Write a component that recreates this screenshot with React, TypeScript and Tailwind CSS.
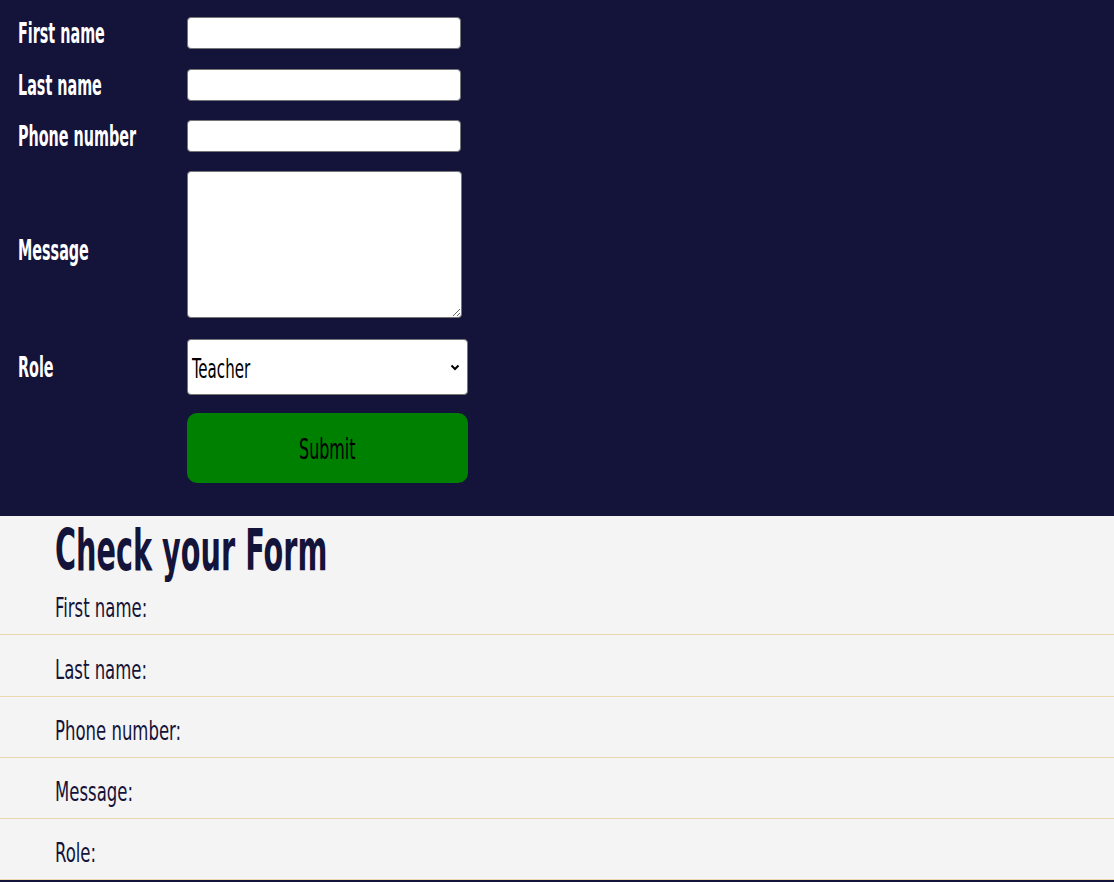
export default function App() {
  const fam = "font-['Liberation_Sans_Narrow','DejaVu_Sans_Condensed',sans-serif]";
  const label = "inline-block origin-left scale-x-[0.57] text-[28px] font-bold leading-none text-white whitespace-nowrap";
  const rows = ["First name:", "Last name:", "Phone number:", "Message:", "Role:"];
  const rowPad = ["pt-[13px] pb-[10px]", "pt-[19px] pb-[10px]", "pt-[18px] pb-[10px]", "pt-[18px] pb-[10px]", "pt-[18px] pb-[10px]"];
  return (
    <div className={`min-h-screen bg-[#f4f4f4] ${fam}`}>
      <form className="h-[516px] bg-[#141339] pl-[18px] pt-[17px]" onSubmit={(e) => e.preventDefault()}>
        <div className="flex h-[32px] items-center">
          <div className="w-[169px] pt-[4px]"><span className={label}>First name</span></div>
          <input className="h-[32px] w-[274px] rounded-[4px] border border-[#767676] bg-white" />
        </div>
        <div className="mt-[20px] flex h-[32px] items-center">
          <div className="w-[169px] pt-[4px]"><span className={label}>Last name</span></div>
          <input className="h-[32px] w-[274px] rounded-[4px] border border-[#767676] bg-white" />
        </div>
        <div className="mt-[19px] flex h-[32px] items-center">
          <div className="w-[169px] pt-[4px]"><span className={label}>Phone number</span></div>
          <input className="h-[32px] w-[274px] rounded-[4px] border border-[#767676] bg-white" />
        </div>
        <div className="mt-[19px] flex items-center">
          <div className="w-[169px] pt-[14px]"><span className={label}>Message</span></div>
          <textarea className="block h-[147px] w-[275px] rounded-[4px] border border-[#767676] bg-white" />
        </div>
        <div className="mt-[21px] flex items-center">
          <div className="w-[169px] pt-[4px]"><span className={label}>Role</span></div>
          <div
            role="combobox"
            aria-expanded="false"
            className="flex h-[56px] w-[281px] items-center justify-between rounded-[4px] border border-[#767676] bg-white pl-[4px] pr-[7px] text-black"
          >
            <span className="inline-block origin-left scale-x-[0.62] whitespace-nowrap pt-[3px] text-[27px] leading-none">Teacher</span>
            <svg width="10" height="7" viewBox="0 0 10 7" className="mt-[1px]">
              <path d="M1.5 1.5 L5 5 L8.5 1.5" fill="none" stroke="#000" strokeWidth="2" />
            </svg>
          </div>
        </div>
        <div className="mt-[18px] flex">
          <div className="w-[169px]" />
          <button
            type="submit"
            className="flex h-[70px] w-[281px] items-center justify-center rounded-[10px] bg-[#008000] text-black"
          >
            <span className="inline-block scale-x-[0.61] pt-[2px] text-[29px] leading-none">Submit</span>
          </button>
        </div>
      </form>
      <section className="bg-[#f4f4f4]">
        <h1 className="ml-[55px] mt-[5px] h-[58px] text-[57px] font-bold leading-[58px] text-[#141339]">
          <span className="inline-block origin-left scale-x-[0.56] whitespace-nowrap">Check your Form</span>
        </h1>
        {rows.map((r, i) => (
          <div key={r} className={`border-b border-[#ead8b3] pl-[55px] ${rowPad[i]}`}>
            <span className="inline-block origin-left scale-x-[0.68] whitespace-nowrap text-[27px] leading-[32px] text-[#141339]">
              {r}
            </span>
          </div>
        ))}
        <div className="h-[4px] bg-[#141339]" />
      </section>
    </div>
  );
}
